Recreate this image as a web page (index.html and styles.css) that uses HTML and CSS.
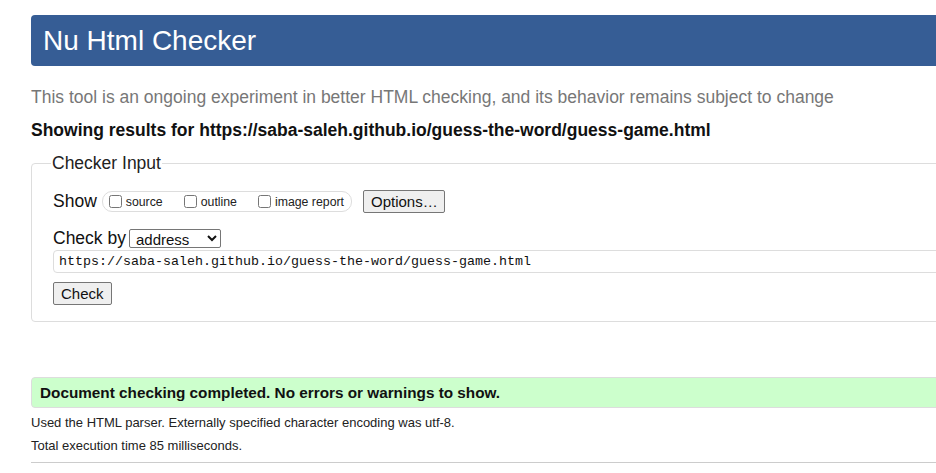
FILE: index.html
```html
<!DOCTYPE html>
<html lang="en">
<head>
<meta charset="utf-8">
<title>Nu Html Checker</title>
<link rel="stylesheet" href="styles.css">
</head>
<body>
<div class="page">
  <h1 class="banner">Nu Html Checker</h1>
  <p class="lede">This tool is an ongoing experiment in better HTML checking, and its behavior remains subject to change</p>
  <p class="showing">Showing results for https://saba-saleh.github.io/guess-the-word/guess-game.html</p>
  <fieldset class="input-box">
    <legend class="legend">Checker Input</legend>
    <div class="row show-row">
      <span class="label">Show</span>
      <span class="opts">
        <label class="opt"><input type="checkbox" class="cb">source</label>
        <label class="opt"><input type="checkbox" class="cb">outline</label>
        <label class="opt"><input type="checkbox" class="cb">image report</label>
      </span>
      <button class="btn options">Options…</button>
    </div>
    <div class="row by-row">
      <span class="label">Check by</span>
      <select class="sel"><option>address</option></select>
    </div>
    <input class="url" type="text" value="https://saba-saleh.github.io/guess-the-word/guess-game.html">
    <button class="btn check">Check</button>
  </fieldset>
  <p class="success">Document checking completed. No errors or warnings to show.</p>
  <p class="meta">Used the HTML parser. Externally specified character encoding was utf-8.</p>
  <p class="meta">Total execution time 85 milliseconds.</p>
  <hr class="rule">
</div>
</body>
</html>
```
FILE: styles.css
```css
html, body {
  margin: 0;
  padding: 0;
  overflow: hidden;
  background: #fff;
}
body {
  font-family: "Liberation Sans", Arial, sans-serif;
  color: #111;
}
.page {
  width: 1100px;
  padding: 15px 0 0 31px;
}
.banner {
  margin: 0;
  height: 51px;
  box-sizing: border-box;
  background: #365d95;
  color: #fff;
  font-weight: normal;
  font-size: 28px;
  line-height: 51px;
  padding-left: 12px;
  border-radius: 4px 0 0 4px;
}
.lede {
  margin: 20px 0 0;
  font-size: 17.5px;
  line-height: 22px;
  color: #777;
}
.showing {
  margin: 11px 0 0;
  font-size: 17.5px;
  line-height: 22px;
  font-weight: bold;
  color: #111;
}
.input-box {
  margin: 12px 0 0;
  padding: 16px 20px 16px 21px;
  border: 1px solid #ddd;
  border-radius: 4px 0 0 4px;
}
.legend {
  font-size: 17.5px;
  padding: 0 1px;
  margin-left: -2px;
  color: #222;
}
.row {
  display: flex;
  align-items: center;
}
.label {
  font-size: 17.5px;
  color: #111;
}
.opts {
  display: inline-flex;
  align-items: center;
  margin-left: 5px;
  height: 19px;
  border: 1px solid #ddd;
  border-radius: 10px;
  padding: 0 7px 0 6px;
}
.opt {
  display: inline-flex;
  align-items: center;
  font-size: 12.3px;
  color: #222;
  margin-right: 21px;
}
.opt:last-child { margin-right: 0; }
.cb {
  margin: 0 4px 0 0;
  width: 13px;
  height: 13px;
}
.btn {
  font-family: "Liberation Sans", Arial, sans-serif;
  font-size: 15px;
  color: #111;
  background: #efefef;
  border: 1px solid #767676;
  border-radius: 2px;
  padding: 0 7px;
}
.options {
  margin-left: 11px;
  height: 23px;
  width: 82px;
}
.by-row {
  margin-top: 15px;
}
.sel {
  margin-left: 3px;
  font-family: "Liberation Sans", Arial, sans-serif;
  font-size: 15px;
  width: 92px;
  height: 19px;
  padding: 0 2px;
  border: 1px solid #767676;
  border-radius: 2px;
  background: #fff;
  color: #111;
}
.url {
  display: block;
  margin-top: 1px;
  width: 1000px;
  height: 23px;
  box-sizing: border-box;
  padding: 0 5px;
  border: 1px solid #ddd;
  border-radius: 4px 0 0 4px;
  font-family: "Liberation Mono", Consolas, monospace;
  font-size: 13.33px;
  color: #111;
}
.check {
  display: block;
  margin-top: 9px;
  height: 23px;
}
.success {
  margin: 55px 0 0;
  height: 31px;
  box-sizing: border-box;
  background: #ccffcc;
  border: 1px solid #ddd;
  border-radius: 4px 0 0 4px;
  padding-left: 8px;
  font-weight: bold;
  font-size: 15.3px;
  line-height: 29px;
  color: #111;
}
.meta {
  margin: 7px 0 0;
  font-size: 13px;
  line-height: 16px;
  color: #222;
}
.rule {
  margin: 8px 0 0;
  border: 0;
  border-top: 1px solid #ccc;
}
```
